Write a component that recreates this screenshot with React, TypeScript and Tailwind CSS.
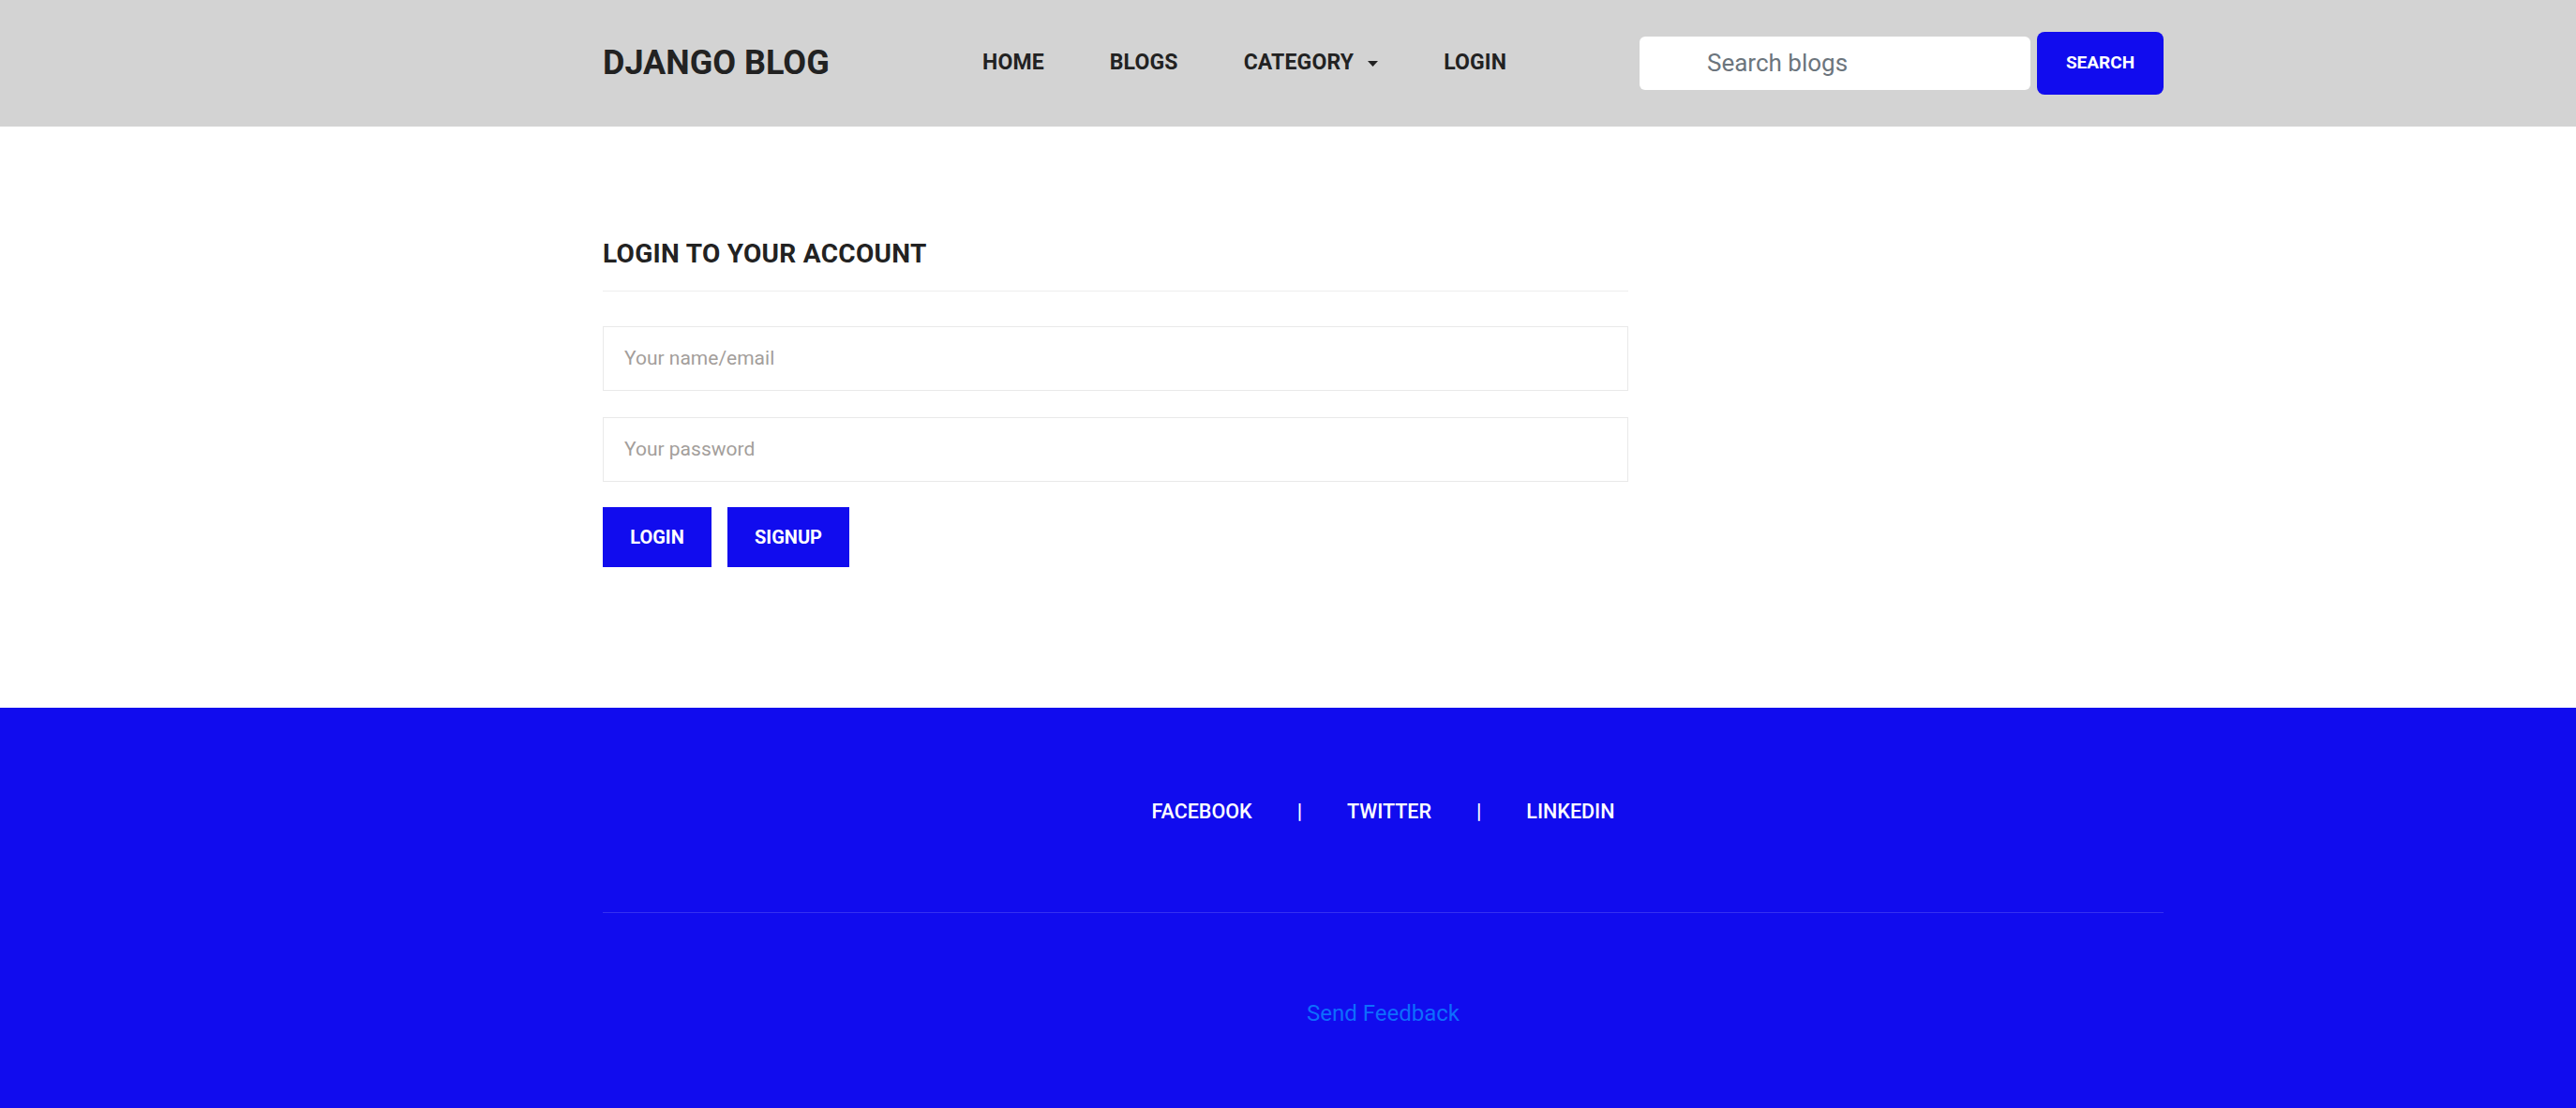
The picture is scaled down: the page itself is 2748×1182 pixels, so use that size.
import React from "react";

export default function App() {
  const font = { fontFamily: "Roboto, 'Liberation Sans', sans-serif" };
  return (
    <div className="min-h-[1182px] bg-white" style={font}>
      {/* Header */}
      <header className="h-[135px] bg-[#d3d3d3]">
        <div className="ml-[643px] flex h-full w-[1665px] items-center">
          <div className="w-[405px]">
            <span className="text-[36px] font-bold leading-none text-[#222222]">DJANGO BLOG</span>
          </div>
          <nav className="flex items-center gap-[70px] text-[23px] font-bold tracking-[0.15px] text-[#222222]">
            <span>HOME</span>
            <span>BLOGS</span>
            <span className="flex items-center gap-[15px]">
              CATEGORY
              <svg width="11" height="6" viewBox="0 0 11 6">
                <path d="M0 0 L11 0 L5.5 6 Z" fill="#222222" />
              </svg>
            </span>
            <span>LOGIN</span>
          </nav>
          <div className="ml-auto flex items-center gap-[7px]">
            <div className="flex h-[57px] w-[417px] items-center rounded-[6px] bg-white pl-[72px] text-[26px] text-[#6c757d]">
              Search blogs
            </div>
            <button className="flex h-[67px] w-[135px] items-center justify-center rounded-[8px] bg-[#110cee] text-[19px] font-bold text-white">
              SEARCH
            </button>
          </div>
        </div>
      </header>

      {/* Main */}
      <main className="pb-[150px] pt-[120px]">
        <div className="ml-[643px] w-[1094px]">
          <h2 className="border-b border-[#eeeeee] pb-[23px] text-[28px] font-bold leading-[32px] tracking-[0.3px] text-[#222222]">
            LOGIN TO YOUR ACCOUNT
          </h2>
          <div className="mt-[37px] flex h-[69px] items-center border border-[#e9e9e9] pl-[22px] text-[21px] text-[#a39e9b]">
            Your name/email
          </div>
          <div className="mt-[28px] flex h-[69px] items-center border border-[#e9e9e9] pl-[22px] text-[21px] text-[#a39e9b]">
            Your password
          </div>
          <div className="mt-[27px] flex gap-[17px]">
            <button className="flex h-[64px] w-[116px] items-center justify-center bg-[#110cee] text-[20px] font-bold text-white">
              LOGIN
            </button>
            <button className="flex h-[64px] w-[130px] items-center justify-center bg-[#110cee] text-[20px] font-bold text-white">
              SIGNUP
            </button>
          </div>
        </div>
      </main>

      {/* Footer */}
      <footer className="bg-[#110cee] pb-[120px] pt-[98px]">
        <div className="ml-[643px] w-[1665px]">
          <div className="flex items-center justify-center text-[21.5px] font-medium leading-[26px] text-white">
            <span>FACEBOOK</span>
            <span className="px-[48px]">|</span>
            <span>TWITTER</span>
            <span className="px-[48px]">|</span>
            <span>LINKEDIN</span>
          </div>
          <div className="mt-[94px] border-t border-white/15" />
          <div className="mt-[92px] text-center text-[24px] leading-[30px] text-[#0d6efd]">Send Feedback</div>
        </div>
      </footer>
    </div>
  );
}
